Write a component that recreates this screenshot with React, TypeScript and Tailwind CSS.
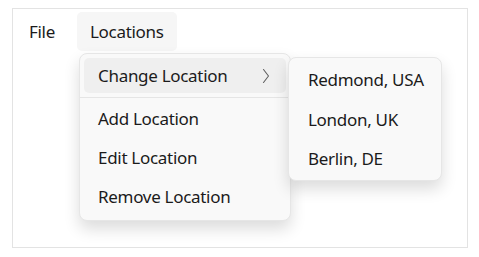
import React from 'react';

const font = { fontFamily: '"Segoe UI", "Noto Sans", "Open Sans", sans-serif' };

function Chevron() {
  return (
    <svg width="8" height="16" viewBox="0 0 8 16" fill="none">
      <path d="M1.5 1.5 L6.5 8 L1.5 14.5" stroke="#5f5f5f" strokeWidth="1.1" strokeLinecap="round" strokeLinejoin="round" />
    </svg>
  );
}

export default function App() {
  return (
    <div className="w-[479px] h-[257px] bg-white pt-[8px] pl-[12px] text-[17px] tracking-[-0.3px] text-[#1b1b1b]" style={font}>
      <div className="relative w-[456px] h-[240px] border border-[#e3e3e3]">
        {/* menu bar */}
        <div className="flex items-center mt-[3px] ml-[3px] gap-[9px]">
          <div className="h-[39px] px-[13px] flex items-center">File</div>
          <div className="h-[39px] px-[13px] flex items-center rounded-[5px] bg-[#f6f6f6]">Locations</div>
        </div>

        {/* dropdown */}
        <div className="absolute left-[66px] top-[44px] w-[212px] rounded-[8px] border border-[#e6e6e6] bg-[#f9f9f9] shadow-[0_8px_16px_rgba(0,0,0,0.14)] px-[4px] pt-[4px] pb-[5px]">
          <div className="h-[35px] rounded-[5px] bg-[#efefef] pl-[14px] pr-[16px] flex items-center justify-between">
            <span>Change Location</span>
            <Chevron />
          </div>
          <div className="h-px bg-[#e5e5e5] -mx-[4px] mt-[4px] mb-[3px]" />
          <div className="flex flex-col gap-[3px]">
            <div className="h-[36px] pl-[14px] flex items-center">Add Location</div>
            <div className="h-[36px] pl-[14px] flex items-center">Edit Location</div>
            <div className="h-[36px] pl-[14px] flex items-center">Remove Location</div>
          </div>
        </div>

        {/* submenu */}
        <div className="absolute left-[275px] top-[48px] w-[154px] rounded-[8px] border border-[#e6e6e6] bg-[#f9f9f9] shadow-[0_8px_16px_rgba(0,0,0,0.14)] px-[4px] pt-[4px] pb-[3px] flex flex-col gap-[3.5px]">
          <div className="h-[36px] pl-[15px] flex items-center">Redmond, USA</div>
          <div className="h-[36px] pl-[15px] flex items-center">London, UK</div>
          <div className="h-[36px] pl-[15px] flex items-center">Berlin, DE</div>
        </div>
      </div>
    </div>
  );
}
